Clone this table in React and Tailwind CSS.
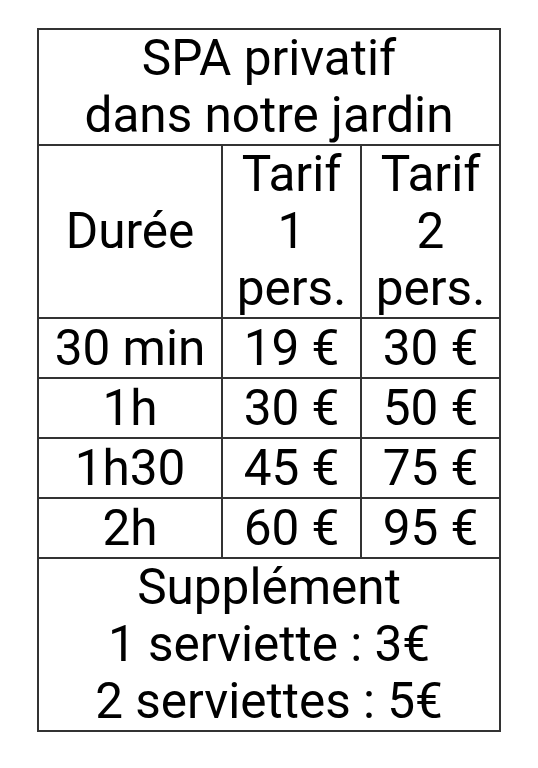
export default function App() {
  const rows = [
    ["30 min", "19 €", "30 €"],
    ["1h", "30 €", "50 €"],
    ["1h30", "45 €", "75 €"],
    ["2h", "60 €", "95 €"],
  ];
  const cell = "border-2 border-[#333] text-center align-middle p-0";
  return (
    <div
      className="w-[538px] h-[768px] bg-white text-black pt-[28px] pl-[37px]"
      style={{ fontFamily: "Roboto, 'Noto Sans', sans-serif" }}
    >
      <table className="border-collapse w-[462px] table-fixed text-[49.5px] leading-[57px]">
        <colgroup>
          <col className="w-[184px]" />
          <col className="w-[139px]" />
          <col className="w-[139px]" />
        </colgroup>
        <tbody>
          <tr className="h-[115px]">
            <td colSpan={3} className={cell}>
              SPA privatif
              <br />
              dans notre jardin
            </td>
          </tr>
          <tr className="h-[172px]">
            <td className={cell}>Durée</td>
            <td className={cell}>
              Tarif
              <br />1<br />
              pers.
            </td>
            <td className={cell}>
              Tarif
              <br />2<br />
              pers.
            </td>
          </tr>
          {rows.map((r) => (
            <tr key={r[0]} className="h-[60px]">
              {r.map((c, i) => (
                <td key={i} className={cell}>
                  {c}
                </td>
              ))}
            </tr>
          ))}
          <tr className="h-[172px]">
            <td colSpan={3} className={cell}>
              Supplément
              <br />1 serviette : 3€
              <br />2 serviettes : 5€
            </td>
          </tr>
        </tbody>
      </table>
    </div>
  );
}
